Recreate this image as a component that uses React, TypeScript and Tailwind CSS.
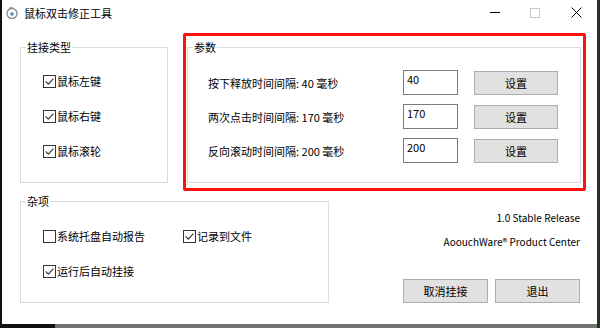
import React from "react";

// 鼠标双击修正工具 – main window

function CheckBox({ checked }: { checked: boolean }) {
  return (
    <svg width="13" height="13" viewBox="0 0 13 13" className="shrink-0">
      <rect x="0.5" y="0.5" width="12" height="12" fill="#fff" stroke="#333" />
      {checked && (
        <path d="M2.6 6.4l2.7 2.8 5.1-5.6" fill="none" stroke="#333" strokeWidth="1.1" />
      )}
    </svg>
  );
}

function Check({ label, checked }: { label: string; checked: boolean }) {
  return (
    <div className="flex items-center gap-[1px] h-[20px]">
      <CheckBox checked={checked} />
      <span>{label}</span>
    </div>
  );
}

// 分组框: 标题压在边框上
function GroupBox({ title, className, children }: { title: string; className: string; children: React.ReactNode }) {
  return (
    <div className={`border border-[#dcdcdc] ${className}`}>
      <span className="block w-fit -mt-[9px] ml-[5px] px-[1px] bg-white leading-[16px]">{title}</span>
      {children}
    </div>
  );
}

const ROWS = [
  { label: "按下释放时间间隔: 40 毫秒", value: "40" },
  { label: "两次点击时间间隔: 170 毫秒", value: "170" },
  { label: "反向滚动时间间隔: 200 毫秒", value: "200" },
];

function WinButton({ children, w }: { children: React.ReactNode; w: string }) {
  return (
    <button className={`${w} h-[24px] bg-[#e1e1e1] border border-[#adadad] flex items-center justify-center text-black`}>
      {children}
    </button>
  );
}

export default function App() {
  return (
    <div className="w-[600px] h-[328px] bg-white flex flex-col border-l-2 border-l-[#111] border-r-[3px] border-r-[#2a2f2a] text-[11px] leading-[16px] text-black font-['Noto_Sans_CJK_SC','Liberation_Sans',sans-serif] overflow-hidden">
      {/* 标题栏 */}
      <div className="h-[30px] pb-[5px] flex items-center shrink-0">
        <div className="pl-[3px] w-[22px]">
          <svg width="13" height="13" viewBox="0 0 13 13">
            <circle cx="7" cy="7.5" r="5" fill="none" stroke="#8a8a8a" strokeWidth="1.3" />
            <path d="M3 3.5c1-1.6 3-2.6 5-2" fill="none" stroke="#9a9a9a" strokeWidth="1" />
            <circle cx="7" cy="8" r="1.8" fill="#5b7fc0" />
          </svg>
        </div>
        <span className="text-[11px]">鼠标双击修正工具</span>
        <div className="ml-auto flex items-center h-full">
          <div className="w-[40px] flex justify-center">
            <div className="w-[10px] h-px bg-black" />
          </div>
          <div className="w-[40px] flex justify-center">
            <div className="w-[10px] h-[10px] border border-[#c8c8c8]" />
          </div>
          <div className="w-[42px] flex justify-center">
            <svg width="11" height="11" viewBox="0 0 11 11">
              <path d="M0.5 0.5l10 10M10.5 0.5l-10 10" stroke="#000" strokeWidth="1" />
            </svg>
          </div>
        </div>
      </div>

      {/* 内容 */}
      <div className="flex flex-col pl-[18px]">
        <div className="flex items-start pt-[3px]">
          <GroupBox title="挂接类型" className="mt-[14px] w-[148px] h-[136px]">
            <div className="flex flex-col gap-[15px] pt-[16px] pl-[22px]">
              <Check label="鼠标左键" checked />
              <Check label="鼠标右键" checked />
              <Check label="鼠标滚轮" checked />
            </div>
          </GroupBox>

          {/* 参数 (红框) */}
          <div className="ml-[15px] w-[403px] h-[158px] border-[3px] border-[#ff1010] rounded-[2px] pt-[11px] pl-[1px]">
            <GroupBox title="参数" className="w-[394px] h-[136px]">
              <div className="flex flex-col gap-[9px] pt-[15px] pl-[20px]">
                {ROWS.map((r) => (
                  <div key={r.value} className="flex items-center h-[25px]">
                    <span className="w-[195px] shrink-0">{r.label}</span>
                    <div className="w-[55px] h-[25px] border border-[#7a7a7a] px-[3px] pt-[1px] leading-[14px]">
                      {r.value}
                    </div>
                    <div className="ml-[16px]">
                      <WinButton w="w-[84px]">设置</WinButton>
                    </div>
                  </div>
                ))}
              </div>
            </GroupBox>
          </div>
        </div>

        <div className="flex items-start">
          <GroupBox title="杂项" className="mt-[10px] w-[309px] h-[102px]">
            <div className="grid grid-cols-[140px_1fr] gap-y-[15px] pt-[17px] pl-[22px]">
              <Check label="系统托盘自动报告" checked={false} />
              <Check label="记录到文件" checked />
              <Check label="运行后自动挂接" checked />
            </div>
          </GroupBox>

          <div className="flex-1 flex flex-col items-end pr-[17px] pt-[19px] text-[10px]">
            <span>1.0 Stable Release</span>
            <span className="mt-[8px]">AoouchWare® Product Center</span>
            <div className="flex gap-[7px] mt-[29px] text-[11px]">
              <WinButton w="w-[85px]">取消挂接</WinButton>
              <WinButton w="w-[85px]">退出</WinButton>
            </div>
          </div>
        </div>
      </div>

      {/* 底边 */}
      <div className="mt-auto flex h-[4px] shrink-0">
        <div className="w-[53px] bg-[#111]" />
        <div className="flex-1 bg-[#6f7370]" />
      </div>
    </div>
  );
}
